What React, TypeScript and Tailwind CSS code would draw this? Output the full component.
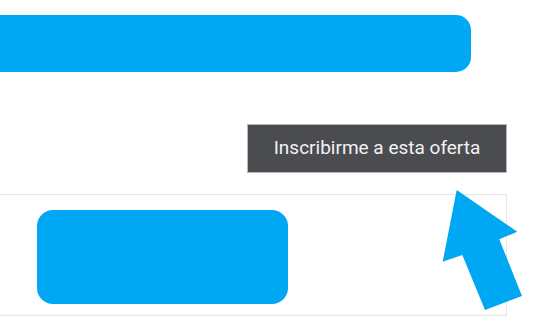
export default function App() {
  return (
    <div className="relative h-[319px] w-[550px] overflow-hidden bg-white" style={{ fontFamily: 'Roboto, "Liberation Sans", sans-serif' }}>
      <div className="pt-[15px]">
        <div className="h-[57px] w-[471px] rounded-r-[15px] bg-[#00a8f3]" />
      </div>

      <div className="mt-[52px] flex w-[507px] justify-end">
        <button className="h-[49px] w-[260px] border border-[#b9b9bb] bg-[#4b4c50] text-[19px] text-[#f2f2f2]">
          Inscribirme a esta oferta
        </button>
      </div>

      <div className="mt-[21px] h-[122px] w-[507px] border-y border-r border-[#e6e6e6] pl-[37px] pt-[15px]">
        <div className="h-[94px] w-[251px] rounded-[16px] bg-[#00a8f3]" />
      </div>

      <svg className="absolute left-0 top-0" width="550" height="319" viewBox="0 0 550 319">
        <polygon
          points="456.7,190 517.3,231.7 499.3,239.3 522,296 485,310 462.3,255 442.7,261.7"
          fill="#00a8f3"
        />
      </svg>
    </div>
  )
}
